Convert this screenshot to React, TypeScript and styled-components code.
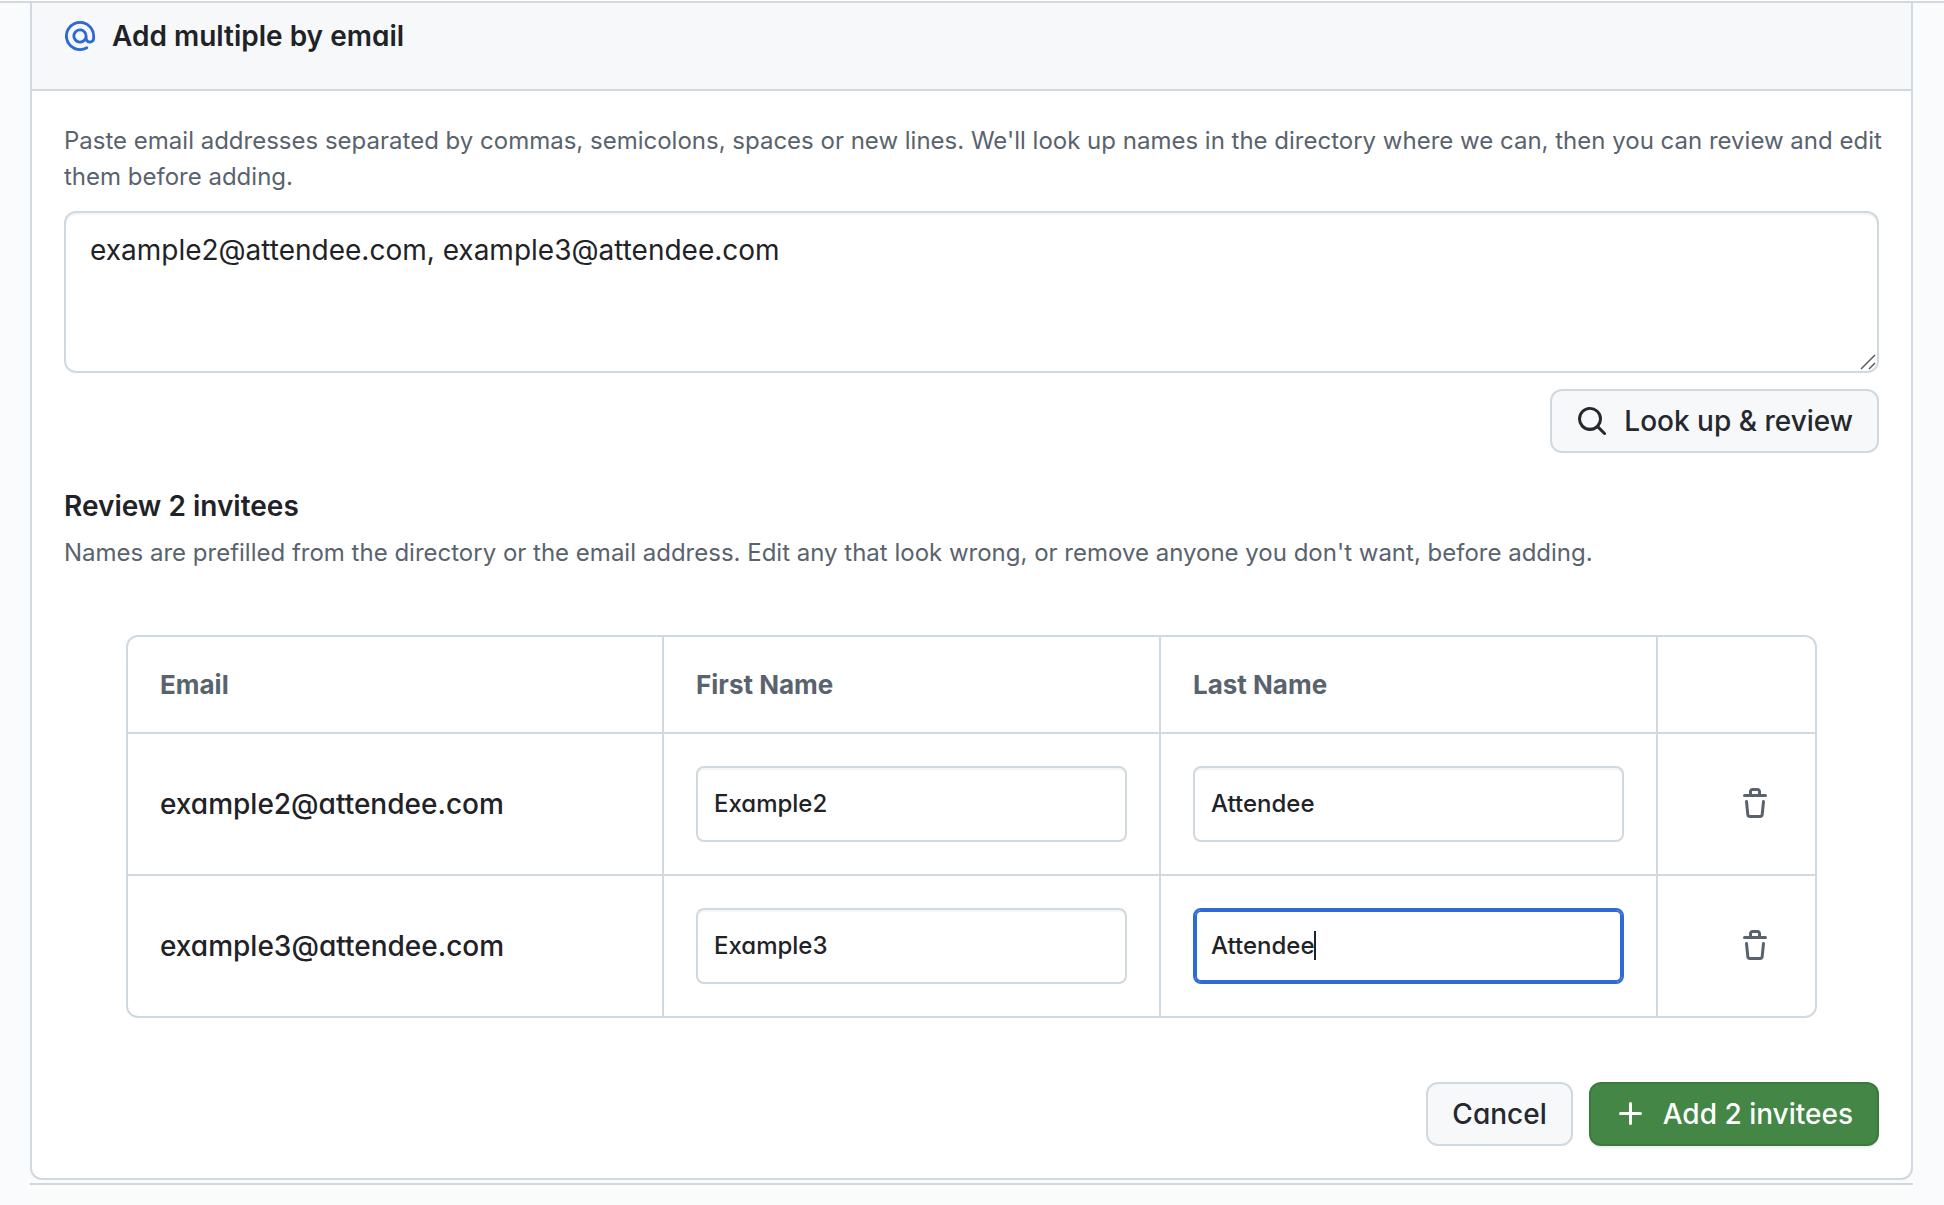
import { useEffect, useRef, useState } from "react";
import styled, { createGlobalStyle } from "styled-components";

const color = {
  page: "#fafbfd",
  footer: "#fafcfb",
  muted: "#f6f8fa",
  border: "#d1d9e0",
  text: "#1f2328",
  textMuted: "#59636e",
  accent: "#2e69d6",
  success: "#438645",
  successBorder: "#3d793f",
};

const GlobalStyle = createGlobalStyle`
  * { box-sizing: border-box; }
  body {
    margin: 0;
    background: ${color.page};
    color: ${color.text};
    font: 400 28px/42px Inter, "Noto Sans", sans-serif;
    -webkit-font-smoothing: antialiased;
  }
  button, input, textarea {
    margin: 0;
    font: inherit;
    color: inherit;
  }
`;

const TopEdge = styled.div`
  height: 3px;
  background: #fff;
  border-bottom: 2px solid ${color.border};
`;

const Main = styled.main`
  padding: 0 31px 0 30px;
`;

const Card = styled.section`
  background: #fff;
  border: 2px solid ${color.border};
  border-top: 0;
  border-radius: 0 0 12px 12px;
`;

const CardHeader = styled.header`
  display: flex;
  align-items: center;
  gap: 16px;
  padding: 12px 32px 32px;
  background: ${color.muted};
  border-bottom: 2px solid ${color.border};
`;

const Title = styled.h2`
  margin: 0;
  font-size: 28px;
  font-weight: 600;
  line-height: 42px;
  font-feature-settings: "cv11";
`;

const CardBody = styled.div`
  display: flex;
  flex-direction: column;
  padding: 32px;
`;

const Hint = styled.p`
  margin: 0 -8px 0 0;
  font-size: 24px;
  line-height: 36px;
  color: ${color.textMuted};
`;

const EmailsField = styled.div`
  position: relative;
  margin: 16px 0;
`;

const EmailsBox = styled.textarea`
  display: block;
  width: 100%;
  height: 162px;
  padding: 16px 24px;
  border: 2px solid ${color.border};
  border-radius: 12px;
  background: #fff;
  box-shadow: inset 0 2px 0 #f4f5f6;
  resize: vertical;
  outline: 0;

  &::-webkit-resizer { background: none; }
`;

const Grip = styled.svg`
  position: absolute;
  right: 3px;
  bottom: 3px;
  pointer-events: none;
  stroke: #5a5c5e;
  stroke-width: 1.5;
  fill: none;
`;

const Actions = styled.div`
  display: flex;
  justify-content: flex-end;
  gap: 16px;
`;

const Button = styled.button<{ $primary?: boolean }>`
  display: inline-flex;
  align-items: center;
  gap: 16px;
  height: 64px;
  padding: 0 24px;
  border: 2px solid ${(p) => (p.$primary ? color.successBorder : color.border)};
  border-radius: 12px;
  background: ${(p) => (p.$primary ? color.success : color.muted)};
  color: ${(p) => (p.$primary ? "#fff" : "#25292e")};
  box-shadow: ${(p) => (p.$primary ? "0 2px 2px rgba(31, 35, 40, 0.08)" : "none")};
  font-weight: 500;
  font-feature-settings: "cv11";
  white-space: nowrap;
  cursor: pointer;
`;

const Review = styled.section`
  display: flex;
  flex-direction: column;
  gap: 8px;
  padding: 32px 0 64px;
`;

const TableFrame = styled.div`
  margin: 0 62px 64px;
  border: 2px solid ${color.border};
  border-radius: 12px;
  overflow: hidden;
`;

const Table = styled.table`
  width: 100%;
  table-layout: fixed;
  border-collapse: separate;
  border-spacing: 0;

  th, td {
    padding: 32px;
    text-align: left;
    border-right: 2px solid ${color.border};
    border-bottom: 2px solid ${color.border};
  }
  th:last-child, td:last-child { border-right: 0; text-align: right; }
  tbody tr:last-child td { border-bottom: 0; }
`;

const Col = styled.col<{ $width?: number }>`
  width: ${(p) => (p.$width ? `${p.$width}px` : "auto")};
`;

const HeadCell = styled.th`
  height: 97px;
  font-size: 26px;
  font-weight: 700;
  line-height: 31px;
  color: ${color.textMuted};
`;

const EmailCell = styled.td`
  font-weight: 500;
  font-feature-settings: "cv11";
`;

const NameField = styled.div`
  position: relative;
`;

const NameInput = styled.input`
  display: block;
  width: 100%;
  height: 76px;
  padding: 0 16px 2px;
  border: 2px solid ${color.border};
  border-radius: 8px;
  background: #fff;
  box-shadow: inset 0 2px 0 #f4f5f6;
  font-size: 24px;
  font-weight: 500;
  font-feature-settings: "cv11";
  caret-color: transparent;
  outline: 0;

  &:focus {
    border-color: ${color.accent};
    box-shadow: inset 0 0 0 2px ${color.accent};
  }
`;

/* Sits over the input: a spacer as wide as the text before the cursor, then the cursor bar. */
const CaretTrack = styled.span`
  position: absolute;
  inset: 0;
  display: none;
  align-items: center;
  padding: 0 18px 2px;
  overflow: hidden;
  pointer-events: none;

  ${NameInput}:focus + & { display: flex; }

  &::after {
    content: "";
    flex: none;
    width: 2px;
    height: 29px;
    background: ${color.text};
  }
`;

const CaretSpace = styled.span`
  flex: none;
`;

const IconButton = styled.button`
  display: inline-flex;
  align-items: center;
  justify-content: center;
  width: 56px;
  height: 56px;
  padding: 0;
  border: 0;
  border-radius: 12px;
  background: none;
  color: ${color.textMuted};
  vertical-align: middle;
  cursor: pointer;
`;

const PageFooter = styled.footer`
  height: 22px;
  margin-top: 3px;
  background: ${color.footer};
  border-top: 2px solid ${color.border};
`;

const Glyph = styled.svg`
  display: block;
  flex: none;
  fill: currentColor;
`;

const paths = {
  mention:
    "M4.75 2.37a6.501 6.501 0 0 0 6.5 11.26.75.75 0 0 1 .75 1.298A7.999 7.999 0 0 1 .989 4.148 8 8 0 0 1 16 7.75v1.5a2.75 2.75 0 0 1-5.072 1.475 3.999 3.999 0 0 1-6.65-4.19A4 4 0 0 1 12 8v1.25a1.25 1.25 0 0 0 2.5 0V7.867a6.5 6.5 0 0 0-9.75-5.496ZM10.5 8a2.5 2.5 0 1 0-5 0 2.5 2.5 0 0 0 5 0Z",
  search:
    "M10.68 11.74a6 6 0 0 1-7.922-8.982 6 6 0 0 1 8.982 7.922l3.04 3.04a.749.749 0 0 1-.326 1.275.749.749 0 0 1-.734-.215ZM11.5 7a4.499 4.499 0 1 0-8.997 0A4.499 4.499 0 0 0 11.5 7Z",
  trash:
    "M11 1.75V3h2.25a.75.75 0 0 1 0 1.5H2.75a.75.75 0 0 1 0-1.5H5V1.75C5 .784 5.784 0 6.75 0h2.5C10.216 0 11 .784 11 1.75ZM4.496 6.675l.66 6.6a.25.25 0 0 0 .249.225h5.19a.25.25 0 0 0 .249-.225l.66-6.6a.75.75 0 0 1 1.492.149l-.66 6.6A1.748 1.748 0 0 1 10.595 15h-5.19a1.75 1.75 0 0 1-1.741-1.575l-.66-6.6a.75.75 0 1 1 1.492-.15ZM6.5 1.75V3h3V1.75a.25.25 0 0 0-.25-.25h-2.5a.25.25 0 0 0-.25.25Z",
  plus: "M7.75 2a.75.75 0 0 1 .75.75V7h4.25a.75.75 0 0 1 0 1.5H8.5v4.25a.75.75 0 0 1-1.5 0V8.5H2.75a.75.75 0 0 1 0-1.5H7V2.75A.75.75 0 0 1 7.75 2Z",
};

type IconProps = { name: keyof typeof paths; tint?: string; viewBox?: string };

function Icon({ name, tint, viewBox = "0 0 16 16" }: IconProps) {
  return (
    <Glyph width={32} height={32} viewBox={viewBox} color={tint} aria-hidden="true">
      <path d={paths[name]} />
    </Glyph>
  );
}

type NameProps = { label: string; value: string; focused?: boolean; onChange: (value: string) => void };

function NameBox({ label, value, focused, onChange }: NameProps) {
  const input = useRef<HTMLInputElement>(null);
  const [caret, setCaret] = useState(0);

  const track = () => {
    const el = input.current;
    if (!el) return;
    const ctx = document.createElement("canvas").getContext("2d");
    if (!ctx) return;
    const style = getComputedStyle(el);
    ctx.font = `${style.fontWeight} ${style.fontSize} ${style.fontFamily}`;
    setCaret(Math.round(ctx.measureText(el.value.slice(0, el.selectionEnd ?? 0)).width));
  };

  useEffect(() => {
    const el = input.current;
    if (!focused || !el) return;
    el.focus();
    el.setSelectionRange(el.value.length, el.value.length);
    track();
  }, []);

  return (
    <NameField>
      <NameInput
        ref={input}
        aria-label={label}
        spellCheck={false}
        value={value}
        onSelect={track}
        onChange={(e) => {
          onChange(e.target.value);
          track();
        }}
      />
      <CaretTrack aria-hidden="true">
        <CaretSpace style={{ width: caret }} />
      </CaretTrack>
    </NameField>
  );
}

type Invitee = { email: string; first: string; last: string };

const initial: Invitee[] = [
  { email: "example2@attendee.com", first: "Example2", last: "Attendee" },
  { email: "example3@attendee.com", first: "Example3", last: "Attendee" },
];

export default function App() {
  const [emails, setEmails] = useState("example2@attendee.com, example3@attendee.com");
  const [invitees, setInvitees] = useState(initial);

  const edit = (index: number, change: Partial<Invitee>) =>
    setInvitees((rows) => rows.map((row, i) => (i === index ? { ...row, ...change } : row)));
  const remove = (index: number) => setInvitees((rows) => rows.filter((_, i) => i !== index));

  return (
    <>
      <GlobalStyle />
      <TopEdge />
      <Main>
        <Card>
          <CardHeader>
            <Icon name="mention" tint={color.accent} viewBox="-0.5 -0.5 17 17" />
            <Title>Add multiple by email</Title>
          </CardHeader>
          <CardBody>
            <Hint as="label" htmlFor="emails">
              Paste email addresses separated by commas, semicolons, spaces or new lines. We'll look up names in the
              directory where we can, then you can review and edit them before adding.
            </Hint>
            <EmailsField>
              <EmailsBox id="emails" spellCheck={false} value={emails} onChange={(e) => setEmails(e.target.value)} />
              <Grip width="16" height="16" viewBox="0 0 16 16" aria-hidden="true">
                <path d="M1 15L15 1M9 15L15 9" />
              </Grip>
            </EmailsField>
            <Actions>
              <Button type="button">
                <Icon name="search" />
                Look up &amp; review
              </Button>
            </Actions>
            <Review>
              <Title as="h3">Review {invitees.length} invitees</Title>
              <Hint>
                Names are prefilled from the directory or the email address. Edit any that look wrong, or remove anyone
                you don't want, before adding.
              </Hint>
            </Review>
            <TableFrame>
              <Table>
                <colgroup>
                  <Col />
                  <Col $width={497} />
                  <Col $width={497} />
                  <Col $width={157} />
                </colgroup>
                <thead>
                  <tr>
                    <HeadCell scope="col">Email</HeadCell>
                    <HeadCell scope="col">First Name</HeadCell>
                    <HeadCell scope="col">Last Name</HeadCell>
                    <HeadCell scope="col" aria-label="Actions" />
                  </tr>
                </thead>
                <tbody>
                  {invitees.map((row, i) => (
                    <tr key={row.email}>
                      <EmailCell>{row.email}</EmailCell>
                      <td>
                        <NameBox
                          label={`First name for ${row.email}`}
                          value={row.first}
                          onChange={(first) => edit(i, { first })}
                        />
                      </td>
                      <td>
                        <NameBox
                          label={`Last name for ${row.email}`}
                          value={row.last}
                          focused={i === initial.length - 1}
                          onChange={(last) => edit(i, { last })}
                        />
                      </td>
                      <td>
                        <IconButton type="button" aria-label={`Remove ${row.email}`} onClick={() => remove(i)}>
                          <Icon name="trash" />
                        </IconButton>
                      </td>
                    </tr>
                  ))}
                </tbody>
              </Table>
            </TableFrame>
            <Actions>
              <Button type="button">Cancel</Button>
              <Button type="button" $primary>
                <Icon name="plus" />
                Add {invitees.length} invitees
              </Button>
            </Actions>
          </CardBody>
        </Card>
        <PageFooter />
      </Main>
    </>
  );
}
